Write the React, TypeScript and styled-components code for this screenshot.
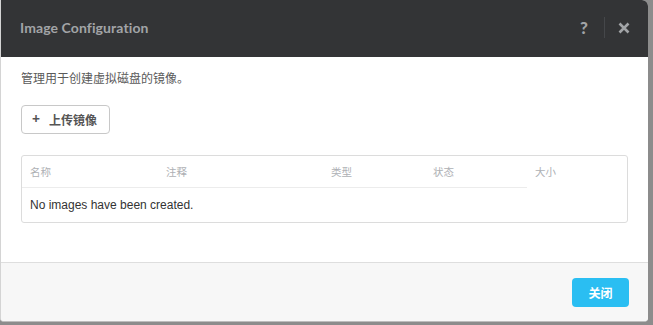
import * as React from 'react';
import styled, { createGlobalStyle } from 'styled-components';

const GlobalStyle = createGlobalStyle`
  html, body {
    margin: 0;
    padding: 0;
    background: #8c8c8c;
  }
  body {
    font-family: 'Open Sans', 'Noto Sans CJK SC', sans-serif;
  }
`;

const Dialog = styled.div`
  width: 647px;
  height: 321px;
  background: #fff;
  border-left: 1px solid #d4d4d4;
  border-bottom: 1px solid #bdbdbd;
  border-radius: 0 6px 4px 4px;
  overflow: hidden;
  display: flex;
  flex-direction: column;
`;

const Header = styled.div`
  height: 57px;
  background: #333436;
  display: flex;
  align-items: center;
  padding: 0 18px 0 19px;
  box-sizing: border-box;
`;

const Title = styled.div`
  flex: 1;
  font-family: 'Lato', 'Noto Sans', sans-serif;
  font-weight: 700;
  font-size: 14px;
  color: #a2a4a7;
  letter-spacing: 0.1px;
  margin-top: -3px;
`;

const HeaderTools = styled.div`
  display: flex;
  align-items: center;
  margin-top: -2px;
`;

const HelpIcon = styled.span`
  font-family: 'Lato', sans-serif;
  font-weight: 900;
  font-size: 17px;
  color: #a2a4a7;
  padding-right: 16px;
`;

const Divider = styled.span`
  width: 1px;
  height: 21px;
  background: #45474a;
  margin-right: 13px;
`;

const CloseIcon = () => (
  <svg width="12" height="12" viewBox="0 0 12 12">
    <path d="M1.5 1.5 L10.5 10.5 M10.5 1.5 L1.5 10.5" stroke="#a2a4a7" strokeWidth="2.6" strokeLinecap="butt" />
  </svg>
);

const Body = styled.div`
  flex: 1;
  padding: 13px 19px 0 20px;
`;

const Description = styled.div`
  font-size: 12px;
  line-height: 18px;
  color: #5a5a5a;
`;

const UploadButton = styled.button`
  margin-top: 17px;
  height: 29px;
  width: 89px;
  border: 1px solid #c8c8c8;
  border-radius: 4px;
  background: #fff;
  display: flex;
  align-items: center;
  padding: 0 0 0 10px;
  font-family: 'Open Sans', 'Noto Sans CJK SC', sans-serif;
  font-weight: 700;
  font-size: 12px;
  color: #555;
  gap: 9px;
`;

const Plus = styled.span`
  font-size: 14px;
  font-weight: 700;
  margin-top: -2px;
`;

const TableBox = styled.div`
  margin-top: 21px;
  border: 1px solid #dcdcdc;
  border-radius: 3px;
  width: 605px;
  height: 66px;
`;

const HeadRow = styled.div`
  display: grid;
  grid-template-columns: 136px 165px 102px 102px 1fr;
  height: 32px;
`;

const HeadCell = styled.div<{ $line?: boolean }>`
  font-size: 10.5px;
  color: #aeb0b4;
  padding: 8px 0 0 8px;
  box-sizing: border-box;
  border-bottom: ${(p) => (p.$line ? '1px solid #ececec' : 'none')};
`;

const EmptyRow = styled.div`
  font-family: 'Liberation Sans', 'Noto Sans CJK SC', sans-serif;
  font-size: 12px;
  color: #333;
  padding: 9px 8px 0;
  line-height: 16px;
`;

const Footer = styled.div`
  height: 59px;
  border-top: 1px solid #dedede;
  background: #f7f7f7;
  display: flex;
  justify-content: flex-end;
  align-items: flex-start;
  padding: 15px 19px 0 0;
  box-sizing: border-box;
`;

const CloseButton = styled.button`
  width: 57px;
  height: 29px;
  border: none;
  border-radius: 4px;
  background: #2abef2;
  color: #fff;
  font-family: 'Open Sans', 'Noto Sans CJK SC', sans-serif;
  font-weight: 700;
  font-size: 12px;
`;

const columns = [
  { label: '名称', line: true },
  { label: '注释', line: true },
  { label: '类型', line: true },
  { label: '状态', line: true },
  { label: '大小', line: false },
];

export default function App() {
  return (
    <React.Fragment>
      <GlobalStyle />
      <Dialog>
        <Header>
          <Title>Image Configuration</Title>
          <HeaderTools>
            <HelpIcon>?</HelpIcon>
            <Divider />
            <CloseIcon />
          </HeaderTools>
        </Header>
        <Body>
          <Description>管理用于创建虚拟磁盘的镜像。</Description>
          <UploadButton>
            <Plus>+</Plus>
            <span>上传镜像</span>
          </UploadButton>
          <TableBox>
            <HeadRow>
              {columns.map((c) => (
                <HeadCell key={c.label} $line={c.line}>
                  {c.label}
                </HeadCell>
              ))}
            </HeadRow>
            <EmptyRow>No images have been created.</EmptyRow>
          </TableBox>
        </Body>
        <Footer>
          <CloseButton>关闭</CloseButton>
        </Footer>
      </Dialog>
    </React.Fragment>
  );
}
